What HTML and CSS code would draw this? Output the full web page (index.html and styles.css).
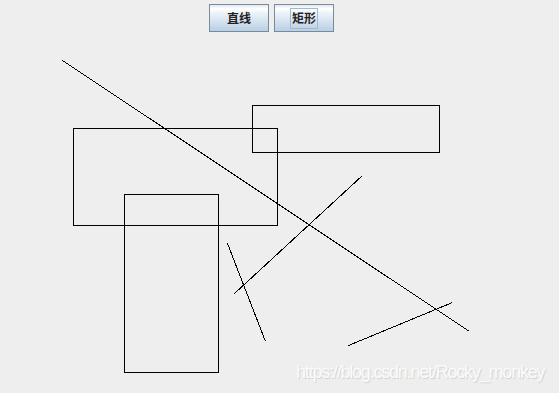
FILE: index.html
```html
<!DOCTYPE html>
<html lang="zh-CN">
<head>
<meta charset="UTF-8">
<meta name="viewport" content="width=device-width, initial-scale=1.0">
<title>画图</title>
<link rel="stylesheet" href="styles.css">
</head>
<body>
<div class="frame">
    <div class="toolbar">
        <button class="tool">直线</button>
        <button class="tool focused"><span class="focus-ring">矩形</span></button>
    </div>

    <svg class="canvas" width="559" height="393" viewBox="0 0 559 393">
        <!-- lines -->
        <line x1="62.5" y1="60.5" x2="469.5" y2="331.5" />
        <line x1="362.5" y1="175.5" x2="234.5" y2="293.5" />
        <line x1="227.5" y1="243.5" x2="265.5" y2="341.5" />
        <line x1="348.5" y1="345.5" x2="452.5" y2="302.5" />
        <!-- rectangles -->
        <rect x="73.5" y="128.5" width="204" height="97" />
        <rect x="252.5" y="105.5" width="187" height="47" />
        <rect x="124.5" y="194.5" width="94" height="178" />
    </svg>

    <div class="watermark">https://blog.csdn.net/Rocky_monkey</div>
</div>
</body>
</html>
```

FILE: styles.css
```css
body {
    margin: 0;
    padding: 0;
    background-color: #eeeeee;
    font-family: "Noto Sans CJK SC", "Liberation Sans", sans-serif;
}

.frame {
    position: relative;
    width: 559px;
    height: 393px;
    overflow: hidden;
}

.toolbar {
    position: relative;
    z-index: 1;
    display: flex;
    gap: 5px;
    padding: 4px 0 0 209px;
}

.tool {
    width: 60px;
    height: 28px;
    margin: 0;
    padding: 0;
    border: 1px solid #7a8a99;
    background: linear-gradient(#dde8f3 0%, #ffffff 14%, #eef3f9 30%, #b8cfe5 100%);
    font-family: "Noto Sans CJK SC", sans-serif;
    font-size: 12px;
    font-weight: bold;
    color: #222222;
    line-height: 1;
    display: flex;
    justify-content: center;
    align-items: center;
}

.focus-ring {
    display: inline-block;
    line-height: 12px;
    padding: 3px 1px 4px 1px;
    border: 1px solid #a3b8cc;
}

.canvas {
    position: absolute;
    top: 0;
    left: 0;
}

.canvas line,
.canvas rect {
    fill: none;
    stroke: #000000;
    stroke-width: 1;
    shape-rendering: crispEdges;
}

.watermark {
    position: absolute;
    left: 296px;
    top: 362px;
    font-family: "Liberation Sans", Arial, sans-serif;
    font-size: 18px;
    letter-spacing: -1.2px;
    color: #fbfbfb;
    text-shadow: 1px 1px 1px rgba(0, 0, 0, 0.12);
}
```
